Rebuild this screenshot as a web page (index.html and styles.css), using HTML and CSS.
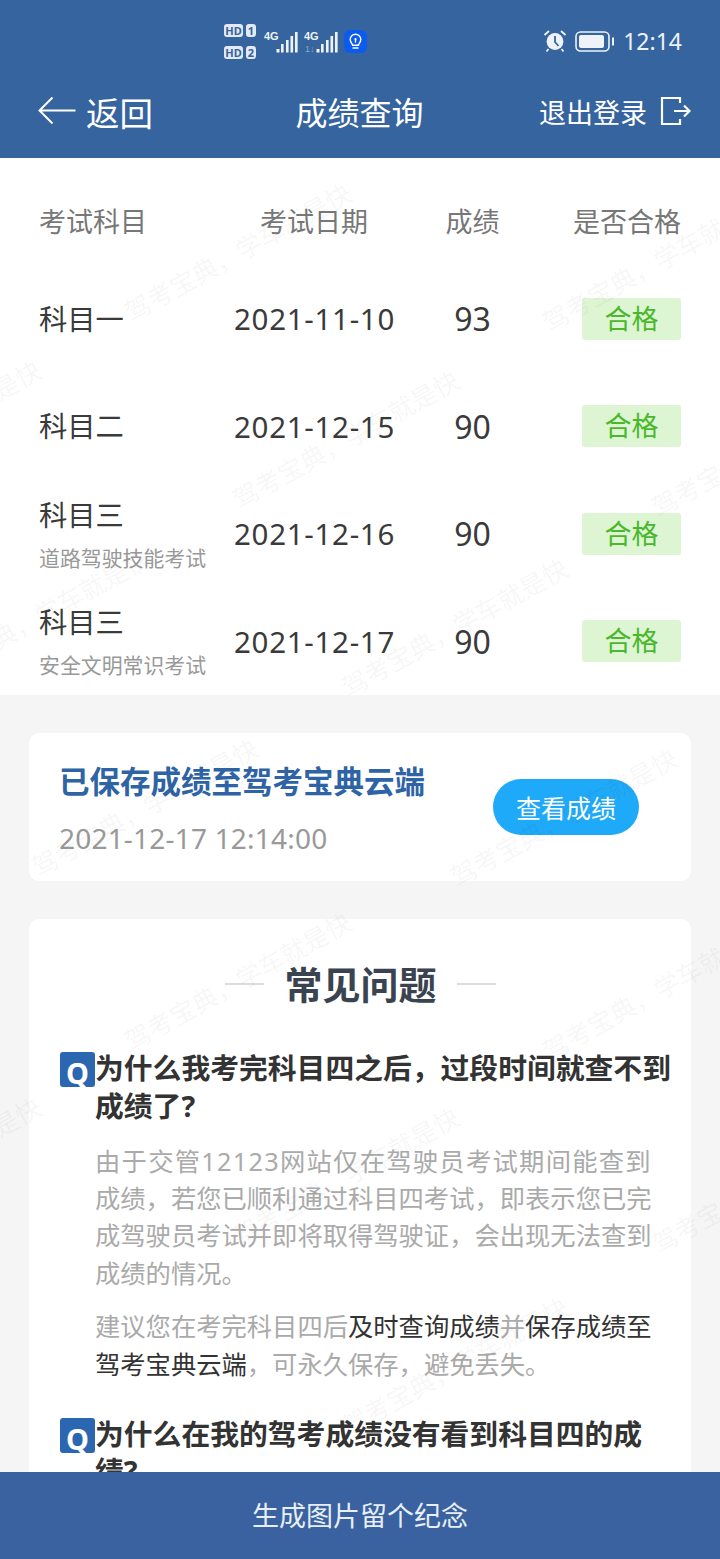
FILE: index.html
```html
<!DOCTYPE html>
<html lang="zh-CN">
<head>
    <meta charset="UTF-8">
    <meta name="viewport" content="width=device-width, initial-scale=1.0">
    <title>成绩查询</title>
    <link rel="stylesheet" href="styles.css">
</head>
<body>
    <div class="container">
        <header>
            <div class="status-bar">
                <div class="status-left">
                    <div class="sim-list">
                        <div class="sim"><span class="hd">HD</span><span class="sim-no">1</span></div>
                        <div class="sim"><span class="hd">HD</span><span class="sim-no">2</span></div>
                    </div>
                    <svg class="signal" width="34" height="26" viewBox="0 0 34 26">
                        <text x="0" y="12" class="signal-text">4G</text>
                        <rect x="12.5" y="21" width="3" height="3.5" fill="#eef3fa"/>
                        <rect x="17" y="16" width="2.6" height="8.5" fill="#eef3fa"/>
                        <rect x="22" y="12" width="2.6" height="12.5" fill="#eef3fa"/>
                        <rect x="26.5" y="8" width="2.6" height="16.5" fill="#eef3fa"/>
                        <rect x="31" y="4" width="2.6" height="20.5" fill="#eef3fa"/>
                    </svg>
                    <svg class="signal" width="34" height="26" viewBox="0 0 34 26">
                        <text x="0" y="12" class="signal-text">4G</text>
                        <text x="1" y="24" class="signal-faint">1↓</text>
                        <rect x="12.5" y="21" width="3" height="3.5" fill="#eef3fa"/>
                        <rect x="17" y="16" width="2.6" height="8.5" fill="#eef3fa"/>
                        <rect x="22" y="12" width="2.6" height="12.5" fill="#eef3fa"/>
                        <rect x="26.5" y="8" width="2.6" height="16.5" fill="#eef3fa"/>
                        <rect x="31" y="4" width="2.6" height="20.5" fill="#eef3fa"/>
                    </svg>
                    <svg class="bulb" width="23" height="23" viewBox="0 0 23 23">
                        <rect width="23" height="23" rx="6" fill="#0b5cee"/>
                        <path d="M8.6 15.2c0-1.6-2.4-2.6-2.4-5.6a5.3 5.3 0 0 1 10.6 0c0 3-2.4 4-2.4 5.6z" fill="none" stroke="#fff" stroke-width="1.4"/>
                        <path d="M9 18h5M11.5 9v3" fill="none" stroke="#fff" stroke-width="1.4" stroke-linecap="round"/>
                        <circle cx="11.5" cy="9" r="1.1" fill="#fff"/>
                    </svg>
                </div>
                <div class="status-right">
                    <svg width="24" height="24" viewBox="0 0 24 24">
                        <circle cx="12" cy="12.5" r="8.4" fill="#eef3fa"/>
                        <path d="M12 7v6l3.5 4" fill="none" stroke="#35649f" stroke-width="1.8"/>
                        <path d="M1.5 6 6 2M22.5 6 18 2M5.5 20l-2 2.5M18.5 20l2 2.5" fill="none" stroke="#eef3fa" stroke-width="1.8"/>
                    </svg>
                    <svg class="battery" width="39" height="21" viewBox="0 0 39 21">
                        <rect x="1" y="1" width="33" height="19" rx="4.5" fill="none" stroke="#eef3fa" stroke-width="1.6"/>
                        <rect x="4" y="4" width="25" height="13" rx="2" fill="#eef3fa"/>
                        <rect x="37" y="6.5" width="2" height="8" fill="#eef3fa"/>
                    </svg>
                    <span class="clock">12:14</span>
                </div>
            </div>
            <nav class="nav-bar">
                <a class="nav-back" href="#">
                    <svg width="38" height="30" viewBox="0 0 38 30">
                        <path d="M14.5 1.5 1.5 14.5l13 13M1.5 14.5H37.5" fill="none" stroke="#fff" stroke-width="2"/>
                    </svg>
                    <span>返回</span>
                </a>
                <h1>成绩查询</h1>
                <a class="nav-logout" href="#">
                    <span>退出登录</span>
                    <svg width="31" height="30" viewBox="0 0 31 30">
                        <path d="M20 7V2H2v26h18v-5M14 15h15.5M24 9.5l5.5 5.5-5.5 5.5" fill="none" stroke="#fff" stroke-width="2.2"/>
                    </svg>
                </a>
            </nav>
        </header>

        <main>
            <section class="score-table">
                <div class="score-head">
                    <span>考试科目</span>
                    <span class="col-date">考试日期</span>
                    <span class="col-score">成绩</span>
                    <span class="col-pass">是否合格</span>
                </div>
                <div class="score-row">
                    <div class="subject">科目一</div>
                    <div class="col-date">2021-11-10</div>
                    <div class="col-score">93</div>
                    <div class="badge">合格</div>
                </div>
                <div class="score-row">
                    <div class="subject">科目二</div>
                    <div class="col-date">2021-12-15</div>
                    <div class="col-score">90</div>
                    <div class="badge">合格</div>
                </div>
                <div class="score-row">
                    <div class="subject">科目三<small>道路驾驶技能考试</small></div>
                    <div class="col-date">2021-12-16</div>
                    <div class="col-score">90</div>
                    <div class="badge">合格</div>
                </div>
                <div class="score-row">
                    <div class="subject">科目三<small>安全文明常识考试</small></div>
                    <div class="col-date">2021-12-17</div>
                    <div class="col-score">90</div>
                    <div class="badge">合格</div>
                </div>
            </section>

            <section class="cards">
                <div class="card saved">
                    <div>
                        <h2>已保存成绩至驾考宝典云端</h2>
                        <p>2021-12-17 12:14:00</p>
                    </div>
                    <button>查看成绩</button>
                </div>

                <div class="card faq">
                    <h2 class="faq-title">常见问题</h2>
                    <div class="question"><span class="q-icon">Q</span><h3>为什么我考完科目四之后，过段时间就查不到成绩了?</h3></div>
                    <div class="answer">
                        <p><span class="spread">由于交管12123网站仅在驾驶员考试期间能查到</span><br>成绩，若您已顺利通过科目四考试，即表示您已完<br>成驾驶员考试并即将取得驾驶证，会出现无法查到<br>成绩的情况。</p>
                        <p>建议您在考完科目四后<b>及时查询成绩</b>并<b>保存成绩至<br>驾考宝典云端</b>，可永久保存，避免丢失。</p>
                    </div>
                    <div class="question"><span class="q-icon">Q</span><h3>为什么在我的驾考成绩没有看到科目四的成绩?</h3></div>
                </div>
            </section>

            <!-- Watermark -->
            <div class="watermarks">
                <span class="wm wm-1">驾考宝典，学车就是快</span>
                <span class="wm wm-2">驾考宝典，学车就是快</span>
                <span class="wm wm-3">驾考宝典，学车就是快</span>
                <span class="wm wm-4">驾考宝典，学车就是快</span>
                <span class="wm wm-5">驾考宝典，学车就是快</span>
                <span class="wm wm-6">驾考宝典，学车就是快</span>
                <span class="wm wm-7">驾考宝典，学车就是快</span>
                <span class="wm wm-8">驾考宝典，学车就是快</span>
                <span class="wm wm-9">驾考宝典，学车就是快</span>
                <span class="wm wm-10">驾考宝典，学车就是快</span>
                <span class="wm wm-11">驾考宝典，学车就是快</span>
                <span class="wm wm-12">驾考宝典，学车就是快</span>
                <span class="wm wm-13">驾考宝典，学车就是快</span>
                <span class="wm wm-14">驾考宝典，学车就是快</span>
                <span class="wm wm-15">驾考宝典，学车就是快</span>
            </div>
        </main>

        <footer>生成图片留个纪念</footer>
    </div>
</body>
</html>
```

FILE: styles.css
```css
body {
    margin: 0;
    font-family: 'Noto Sans', 'Noto Sans CJK SC', sans-serif;
    background-color: #f5f5f5;
    color: #333;
}

.container {
    display: flex;
    flex-direction: column;
    height: 1559px;
    overflow: hidden;
}

header {
    flex: none;
    height: 158px;
    background-color: #35649f;
    color: white;
}

/* Status bar */
.status-bar {
    height: 67px;
    padding: 15px 38px 0 224px;
    box-sizing: border-box;
    display: flex;
    justify-content: space-between;
    align-items: center;
}

.status-left {
    display: flex;
    align-items: center;
    gap: 6px;
}

.sim-list {
    display: flex;
    flex-direction: column;
    gap: 9px;
    margin-right: 2px;
}

.sim {
    display: flex;
    gap: 3px;
}

.hd, .sim-no {
    height: 13px;
    line-height: 13px;
    border-radius: 3px;
    background-color: #e3eaf4;
    color: #35649f;
    font-size: 11px;
    font-weight: bold;
    text-align: center;
}

.hd {
    width: 19px;
}

.sim-no {
    width: 10px;
}

.signal-text {
    font-family: 'Liberation Sans', sans-serif;
    font-size: 11px;
    font-weight: bold;
    fill: #eef3fa;
}

.signal-faint {
    font-family: 'Liberation Sans', sans-serif;
    font-size: 9px;
    fill: #8fa9cc;
}

.status-right {
    display: flex;
    align-items: center;
    gap: 8px;
}

.clock {
    font-family: 'Noto Sans', sans-serif;
    font-size: 23px;
    line-height: 30px;
    margin-left: 1px;
    color: #eef3fa;
}

/* Nav bar */
.nav-bar {
    height: 88px;
    padding: 0 29px 0 38px;
    display: grid;
    grid-template-columns: 1fr auto 1fr;
    align-items: center;
}

.nav-bar a {
    display: flex;
    align-items: center;
    color: white;
    text-decoration: none;
}

.nav-bar h1 {
    margin: 0 10px 0 0;
    font-size: 32px;
    font-weight: normal;
}

.nav-back {
    gap: 10px;
    font-size: 33.5px;
}

.nav-logout {
    justify-content: flex-end;
    gap: 13px;
    font-size: 27px;
}

/* Score table */
main {
    flex: 1;
    position: relative;
    overflow: hidden;
}

.score-table {
    background-color: white;
    padding: 36px 39px 0;
}

.score-head, .score-row {
    display: grid;
    grid-template-columns: 195px 160px 1fr 99px;
    align-items: center;
}

.score-head {
    height: 52px;
    margin-bottom: 19px;
    font-size: 27px;
    color: #777;
}

.score-head .col-pass {
    justify-self: end;
    white-space: nowrap;
}

.score-row {
    height: 107.5px;
    font-size: 29.5px;
    color: #3a3a3a;
}

.col-date {
    text-align: center;
    white-space: nowrap;
    letter-spacing: 0.7px;
}

.score-head .col-date {
    letter-spacing: 0;
}

.col-score {
    padding-right: 31px;
    text-align: center;
}

.score-row .col-score {
    font-size: 32px;
}

.subject {
    font-size: 28.3px;
    line-height: 40px;
}

.subject small {
    display: block;
    font-size: 20.9px;
    line-height: 30px;
    margin-top: 8px;
    color: #999;
}

.badge {
    height: 42px;
    line-height: 42px;
    border-radius: 3px;
    background-color: #def5d3;
    color: #4ab82c;
    font-size: 27px;
    text-align: center;
}

/* Cards */
.cards {
    padding: 38px 29px;
    display: flex;
    flex-direction: column;
    gap: 38px;
}

.card {
    background-color: white;
    border-radius: 10px;
}

.saved {
    height: 148px;
    padding: 0 52px 0 30px;
    display: flex;
    justify-content: space-between;
    align-items: center;
}

.saved h2 {
    margin: 0;
    font-size: 30.5px;
    line-height: 44px;
    color: #2e64a5;
}

.saved p {
    margin: 17px 0 0;
    font-size: 28px;
    line-height: 36px;
    letter-spacing: 0.2px;
    color: #999;
}

.saved button {
    width: 146px;
    height: 56px;
    padding: 0;
    border: none;
    border-radius: 28px;
    background-color: #1fa9f9;
    color: white;
    font-family: inherit;
    font-size: 25px;
    cursor: pointer;
}

.faq {
    padding: 38px 20px 0 31px;
}

.faq-title {
    display: flex;
    align-items: center;
    justify-content: center;
    gap: 20px;
    margin: 0 0 38px;
    padding-right: 10px;
    font-size: 38px;
    line-height: 54px;
    color: #3a4350;
}

.faq-title::before,
.faq-title::after {
    content: "";
    width: 39px;
    height: 2px;
    background-color: #dcdcdc;
}

.question {
    display: flex;
    align-items: flex-start;
}

.question h3 {
    margin: 0;
    font-size: 28.8px;
    line-height: 37.5px;
    font-weight: bold;
    color: #333;
}

.q-icon {
    flex: none;
    width: 35px;
    height: 35px;
    margin-top: 3px;
    border-radius: 3px;
    overflow: hidden;
    background-color: #2b66b1;
    color: white;
    font-size: 29px;
    line-height: 41px;
    font-weight: bold;
    text-align: center;
}

.answer {
    margin: 19px 0 32px 35px;
    font-size: 25.3px;
    line-height: 37.2px;
    white-space: nowrap;
    color: #aaa;
}

.answer p {
    margin: 0 0 16.5px;
}

.answer b {
    font-weight: normal;
    color: #333;
}

.spread {
    letter-spacing: 1.27px;
}

/* Watermark */
.watermarks {
    position: absolute;
    top: 0;
    left: 0;
    width: 100%;
    height: 100%;
    pointer-events: none;
}

.wm {
    position: absolute;
    transform: translate(3px, 6px) rotate(-29deg);
    transform-origin: 0 100%;
    white-space: nowrap;
    font-size: 25.4px;
    line-height: 26px;
    color: rgba(0, 0, 0, 0.05);
}

.wm-1 { left: 130px; top: 135px; }
.wm-2 { left: 548px; top: 145px; }
.wm-3 { left: -180px; top: 312px; }
.wm-4 { left: 238px; top: 322px; }
.wm-5 { left: 657px; top: 330px; }
.wm-6 { left: -71px; top: 500px; }
.wm-7 { left: 347px; top: 510px; }
.wm-8 { left: 37px; top: 690px; }
.wm-9 { left: 456px; top: 700px; }
.wm-10 { left: 130px; top: 864px; }
.wm-11 { left: 548px; top: 874px; }
.wm-12 { left: -180px; top: 1049px; }
.wm-13 { left: 238px; top: 1059px; }
.wm-14 { left: 657px; top: 1067px; }
.wm-15 { left: 347px; top: 1249px; }

footer {
    flex: none;
    height: 87px;
    line-height: 87px;
    background-color: #3a62a0;
    color: #e8eef6;
    font-size: 27px;
    text-align: center;
}
```
